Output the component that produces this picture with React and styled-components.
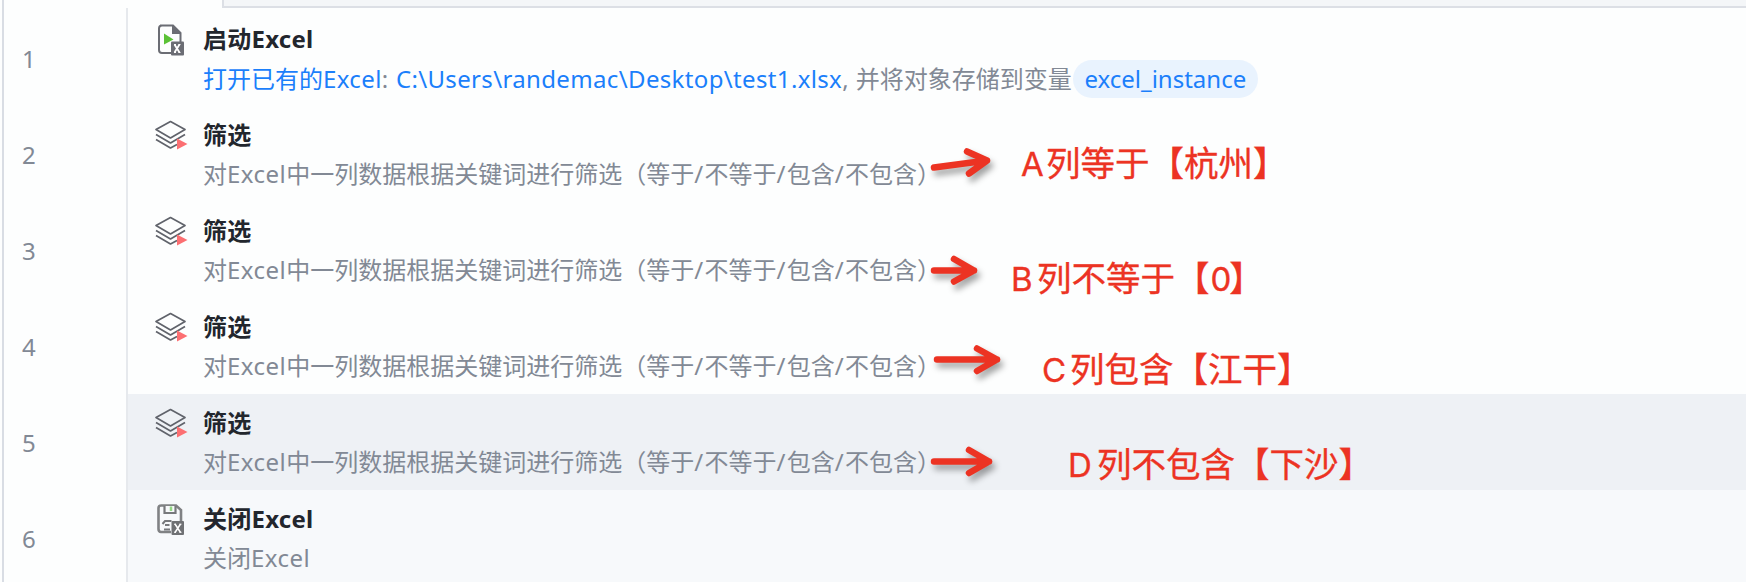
import React from "react";
import styled, { createGlobalStyle } from "styled-components";

const Global = createGlobalStyle`
  * { box-sizing: border-box; }
  body { margin: 0; background: #fdfefe; overflow: hidden; }
`;

const Editor = styled.main`
  position: relative;
  height: 582px;
  padding-left: 2px;
  overflow: hidden;
  background: #fdfefe;
  font-family: "Noto Sans", "Noto Sans CJK SC", sans-serif;
  font-size: 24px;
  color: #828995;
`;

const Sheet = styled.div`
  height: 100%;
  border-left: 2px solid #d9dde4;
`;

const TabBar = styled.div`
  height: 8px;
  display: flex;
`;

const ActiveTab = styled.div`
  width: 218px;
`;

const TabStrip = styled.div`
  flex: 1;
  border-left: 2px solid #dcdfe5;
  border-bottom: 2px solid #dcdfe5;
  background: #f4f6f8;
`;

const Row = styled.div`
  display: flex;
  height: 96px;
  &:first-child { height: 98px; }
  &:first-child > * { padding-top: 14px; }
  &:first-child > :first-child { padding-top: 2px; }
`;

const LineNumber = styled.div`
  width: 122px;
  padding-left: 18px;
  line-height: 98px;
  flex: none;
`;

const Step = styled.div`
  flex: 1;
  display: flex;
  padding: 12px 0 0 26px;
  border-left: 2px solid #e6e9ed;
  background: ${(p) => p.$bg || "transparent"};
`;

const IconBox = styled.div`
  width: 49px;
  flex: none;
  svg { display: block; }
`;

const Body = styled.div`
  white-space: nowrap;
`;

const Title = styled.div`
  height: 34px;
  line-height: 34px;
  font-weight: 700;
  letter-spacing: 0.25px;
  color: #22262d;
`;

const Detail = styled.div`
  display: flex;
  align-items: center;
  height: 38px;
  margin-top: ${(p) => (p.$tall ? 4 : 3)}px;
  line-height: 38px;
`;

const Run = styled.span`
  white-space: pre;
  letter-spacing: ${(p) => p.$spacing || 0}px;
  color: ${(p) => (p.$link ? "#1b7ffb" : "inherit")};
`;

const Variable = styled.span`
  height: 38px;
  width: 185px;
  margin-left: 1px;
  line-height: 38px;
  text-align: center;
  border-radius: 19px;
  background: #e9f3fe;
  color: #1b7ffb;
`;

const Arrows = styled.svg`
  position: absolute;
  inset: 0;
  filter: drop-shadow(3px 5px 3px rgba(0, 0, 0, 0.36));
`;

const Note = styled.div`
  position: absolute;
  left: ${(p) => p.$x}px;
  top: ${(p) => p.$y}px;
  display: flex;
  line-height: 40px;
  font-family: Inter, "Noto Sans CJK SC", sans-serif;
  font-size: 34.5px;
  white-space: nowrap;
  color: #ec3323;
  -webkit-text-stroke: 0.35px #ec3323;
`;

const Letter = styled.span`
  width: ${(p) => p.$w}px;
  font-size: 33px;
`;

const Zero = styled.span`
  margin: 0 -2px 0 1px;
  font-size: 33px;
`;

const LaunchIcon = () => (
  <svg width="30" height="34" viewBox="0 0 30 34">
    <path d="M6 3.5H19L26.5 11V31H8Q5 31 5 28V6.5Q5 3.5 8 3.5Z" fill="#fdfefe" stroke="#6b6d74" strokeWidth="2" />
    <path d="M18 3L27 12H18Z" fill="#6b6d74" />
    <path d="M10 11.5L19.5 17.5L10 22.5Z" fill="#5bc236" />
    <rect x="17" y="19.5" width="13" height="14" rx="1" fill="#6b6d74" />
    <path d="M20.5 22.5L25.5 30.5M25.5 22.5L20.5 30.5" stroke="#fff" strokeWidth="1.8" />
    <path d="M20 22.5H22M24.5 22.5H26.5M20 30.5H22M24.5 30.5H26.5" stroke="#fff" strokeWidth="1" />
  </svg>
);

const LayersIcon = () => (
  <svg width="34" height="34" viewBox="0 0 34 34">
    <g fill="none" stroke="#60636b" strokeWidth="1.7" strokeLinejoin="round">
      <path d="M16.5 3.5L31 11.5L16.5 20L2 11.5Z" />
      <path d="M2 16.5L16.5 25L31 16.5" />
      <path d="M2 21.5L16.5 30L23 26.5" />
    </g>
    <path d="M23 20.5L33.5 26L23 31.5Z" fill="#fc6f72" />
  </svg>
);

const CloseIcon = () => (
  <svg width="30" height="34" viewBox="0 0 30 34">
    <path d="M6.5 3.5H22L27 8V20M17 30H7Q4.5 30 4.5 27V6Q4.5 3.5 7 3.5" fill="none" stroke="#808284" strokeWidth="2.6" />
    <path d="M10.5 4V11H21.5V4" fill="#f7f9fb" stroke="#77797c" strokeWidth="2.2" />
    <path d="M17 4.5V9" stroke="#93d884" strokeWidth="2.5" />
    <path d="M8.5 22L11 19H17.5M11 23H15.5M10 27.5H16" fill="none" stroke="#77797c" strokeWidth="2" />
    <rect x="17.5" y="19" width="12.5" height="14" rx="1" fill="#6f7174" />
    <path d="M21 22L26.5 30.5M26.5 22L21 30.5" stroke="#fff" strokeWidth="1.5" />
    <path d="M20 22.2H22M25.5 22.2H27.5M20 30.3H22M25.5 30.3H27.5" stroke="#fff" strokeWidth="1" />
  </svg>
);

const icons = { launch: LaunchIcon, layers: LayersIcon, close: CloseIcon };

const FilterDetail = () => (
  <Detail>
    <Run>对</Run>
    <Run $spacing={0.5}>Excel</Run>
    <Run>中一列数据根据关键词进行筛选（等于</Run>
    <Run $spacing={1.3}>/</Run>
    <Run>不等于</Run>
    <Run $spacing={1.3}>/</Run>
    <Run>包含</Run>
    <Run $spacing={1.3}>/</Run>
    <Run>不包含）</Run>
  </Detail>
);

const steps = [
  {
    icon: "launch",
    title: "启动Excel",
    detail: (
      <Detail $tall>
        <Run $link>打开已有的</Run>
        <Run $link $spacing={0.4}>Excel</Run>
        <Run $spacing={0.7}>: </Run>
        <Run $link $spacing={0.35}>C:\Users\randemac\Desktop\test1.xlsx</Run>
        <Run $spacing={0.5}>, </Run>
        <Run>并将对象存储到变量</Run>
        <Variable>excel_instance</Variable>
      </Detail>
    ),
  },
  { icon: "layers", title: "筛选", detail: <FilterDetail /> },
  { icon: "layers", title: "筛选", detail: <FilterDetail /> },
  { icon: "layers", title: "筛选", detail: <FilterDetail /> },
  { icon: "layers", title: "筛选", detail: <FilterDetail />, bg: "#eef1f5" },
  {
    icon: "close",
    title: "关闭Excel",
    detail: (
      <Detail>
        <Run>关闭</Run>
        <Run $spacing={0.5}>Excel</Run>
      </Detail>
    ),
    bg: "#f7f9fb",
  },
];

const arrows = [
  "M934 167.5L987 160.5M967 151.5L987 160.5L969 173.5",
  "M934 270.5H974M954 259L974 270.5L954 281.5",
  "M937 359.5H997M977 348.5L997 359.5L977 371",
  "M934 461.5H989M969 450L989 461.5L969 473",
];

const notes = [
  { x: 1021, y: 144, letter: "A", w: 25, text: "列等于【杭州】" },
  { x: 1011, y: 259, letter: "B", w: 26, text: <>列不等于【<Zero>0</Zero>】</> },
  { x: 1042, y: 350, letter: "C", w: 28, text: "列包含【江干】" },
  { x: 1068, y: 445, letter: "D", w: 29, text: "列不包含【下沙】" },
];

export default function App() {
  return (
    <Editor>
      <Global />
      <Sheet>
        <TabBar>
          <ActiveTab />
          <TabStrip />
        </TabBar>
        <div>
          {steps.map((s, i) => {
            const Icon = icons[s.icon];
            return (
              <Row key={i}>
                <LineNumber>{i + 1}</LineNumber>
                <Step $bg={s.bg}>
                  <IconBox><Icon /></IconBox>
                  <Body>
                    <Title>{s.title}</Title>
                    {s.detail}
                  </Body>
                </Step>
              </Row>
            );
          })}
        </div>
      </Sheet>
      <Arrows width="1746" height="582" fill="none" stroke="#ec3323" strokeWidth="6.5" strokeLinecap="round" strokeLinejoin="round">
        {arrows.map((d) => <path key={d} d={d} />)}
      </Arrows>
      {notes.map((n) => (
        <Note key={n.letter} $x={n.x} $y={n.y}>
          <Letter $w={n.w}>{n.letter}</Letter>
          <span>{n.text}</span>
        </Note>
      ))}
    </Editor>
  );
}
